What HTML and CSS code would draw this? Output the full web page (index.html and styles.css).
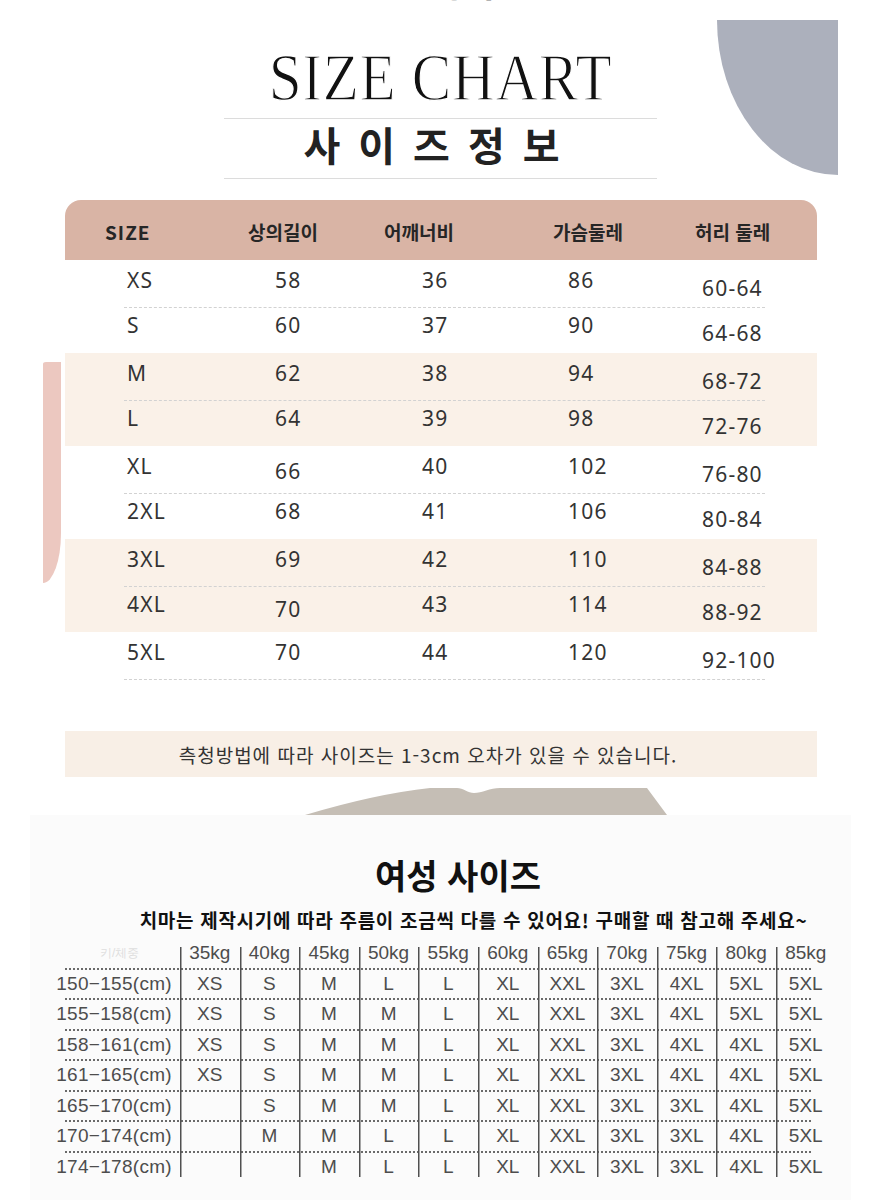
FILE: index.html
```html
<!DOCTYPE html>
<html lang="ko">
<head>
<meta charset="utf-8">
<title>Size Chart</title>
<link rel="stylesheet" href="styles.css">
</head>
<body>
<div class="page">
  <div class="deco-circle"></div>
  <div class="deco-pink"></div>

  <div class="sliver"><span>상품 사이즈</span></div>

  <header class="head">
    <h1 class="title"><span>SIZE CHART</span></h1>
    <div class="rule rule-top"></div>
    <div class="subtitle">사이즈정보</div>
    <div class="rule rule-bottom"></div>
  </header>

  <section class="chart">
    <div class="chart-head">
      <div>SIZE</div><div>상의길이</div><div>어깨너비</div><div>가슴둘레</div><div>허리 둘레</div>
    </div>

    <div class="group">
      <div class="row r1"><span>XS</span><span>58</span><span>36</span><span>86</span><span class="w">60-64</span></div>
      <div class="dash"></div>
      <div class="row r2"><span>S</span><span>60</span><span>37</span><span>90</span><span class="w">64-68</span></div>
    </div>
    <div class="group alt">
      <div class="row r1"><span>M</span><span>62</span><span>38</span><span>94</span><span class="w">68-72</span></div>
      <div class="dash"></div>
      <div class="row r2"><span>L</span><span>64</span><span>39</span><span>98</span><span class="w">72-76</span></div>
    </div>
    <div class="group">
      <div class="row r1"><span>XL</span><span class="lo">66</span><span>40</span><span>102</span><span class="w">76-80</span></div>
      <div class="dash"></div>
      <div class="row r2"><span>2XL</span><span>68</span><span>41</span><span>106</span><span class="w">80-84</span></div>
    </div>
    <div class="group alt">
      <div class="row r1"><span>3XL</span><span>69</span><span>42</span><span>110</span><span class="w">84-88</span></div>
      <div class="dash"></div>
      <div class="row r2"><span>4XL</span><span class="lo">70</span><span>43</span><span>114</span><span class="w">88-92</span></div>
    </div>
    <div class="group">
      <div class="row r1"><span>5XL</span><span>70</span><span>44</span><span>120</span><span class="w">92-100</span></div>
      <div class="dash"></div>
      <div class="row r2"></div>
    </div>
  </section>

  <div class="note">측청방법에 따라 사이즈는 1-3cm 오차가 있을 수 있습니다.</div>

  <svg class="shape" viewBox="0 0 881 27" width="881" height="27" aria-hidden="true">
    <path d="M305 27 Q375 6 430 0 L457 0 C463 0 468 5 474 5 C482 5 490 0 500 0 L647 0 L667 27 Z" fill="#c5beb5"/>
  </svg>

  <section class="women">
    <h2 class="w-title">여성 사이즈</h2>
    <p class="w-sub">치마는 제작시기에 따라 주름이 조금씩 다를 수 있어요! 구매할 때 참고해 주세요~</p>

    <div class="grid">
      <div class="grow ghead">
        <div class="lab faint">키/체중</div>
        <div>35kg</div><div>40kg</div><div>45kg</div><div>50kg</div><div>55kg</div><div>60kg</div><div>65kg</div><div>70kg</div><div>75kg</div><div>80kg</div><div>85kg</div>
      </div>
      <div class="grow">
        <div class="lab">150−155(cm)</div>
        <div>XS</div><div>S</div><div>M</div><div>L</div><div>L</div><div>XL</div><div>XXL</div><div>3XL</div><div>4XL</div><div>5XL</div><div>5XL</div>
      </div>
      <div class="grow">
        <div class="lab">155−158(cm)</div>
        <div>XS</div><div>S</div><div>M</div><div>M</div><div>L</div><div>XL</div><div>XXL</div><div>3XL</div><div>4XL</div><div>5XL</div><div>5XL</div>
      </div>
      <div class="grow">
        <div class="lab">158−161(cm)</div>
        <div>XS</div><div>S</div><div>M</div><div>M</div><div>L</div><div>XL</div><div>XXL</div><div>3XL</div><div>4XL</div><div>4XL</div><div>5XL</div>
      </div>
      <div class="grow">
        <div class="lab">161−165(cm)</div>
        <div>XS</div><div>S</div><div>M</div><div>M</div><div>L</div><div>XL</div><div>XXL</div><div>3XL</div><div>4XL</div><div>4XL</div><div>5XL</div>
      </div>
      <div class="grow">
        <div class="lab">165−170(cm)</div>
        <div></div><div>S</div><div>M</div><div>M</div><div>L</div><div>XL</div><div>XXL</div><div>3XL</div><div>3XL</div><div>4XL</div><div>5XL</div>
      </div>
      <div class="grow">
        <div class="lab">170−174(cm)</div>
        <div></div><div>M</div><div>M</div><div>L</div><div>L</div><div>XL</div><div>XXL</div><div>3XL</div><div>3XL</div><div>4XL</div><div>5XL</div>
      </div>
      <div class="grow glast">
        <div class="lab">174−178(cm)</div>
        <div></div><div></div><div>M</div><div>L</div><div>L</div><div>XL</div><div>XXL</div><div>3XL</div><div>3XL</div><div>4XL</div><div>5XL</div>
      </div>
    </div>
  </section>
</div>
</body>
</html>
```

FILE: styles.css
```css
html, body {
  margin: 0;
  padding: 0;
  background: #ffffff;
}

.page {
  position: relative;
  width: 881px;
  height: 1200px;
  overflow: hidden;
  background: #ffffff;
  font-family: "Noto Sans CJK KR", "Noto Sans", sans-serif;
}

/* decorative shapes */
.deco-circle {
  position: absolute;
  left: 717px;
  top: 20px;
  width: 121px;
  height: 155px;
  background: #acb0bc;
  border-bottom-left-radius: 100% 100%;
}

.deco-pink {
  position: absolute;
  left: 43px;
  top: 362px;
  width: 18px;
  height: 221px;
  background: #ecc8c0;
  border-top-left-radius: 3px 2px;
  border-bottom-right-radius: 18px 50px;
}

/* cut-off text at very top */
.sliver {
  height: 20px;
  overflow: hidden;
  text-align: center;
}
.sliver span {
  display: block;
  margin-top: -37px;
  font: 700 36px/36px "Noto Sans CJK KR", sans-serif;
  color: #777;
}

/* title */
.head {
  margin-top: 23px;
  display: flex;
  flex-direction: column;
  align-items: center;
}
.title {
  margin: 0;
  height: 68px;
  font: 400 68px/68px "Liberation Serif", serif;
  color: #111;
}
.title span {
  display: inline-block;
  transform: scaleX(0.87);
  letter-spacing: 0.8px;
  -webkit-text-stroke: 1.3px #ffffff;
}
.rule {
  width: 433px;
  height: 1px;
  background: #dcdcdc;
}
.rule-top { margin-top: 7px; }
.rule-bottom { margin-top: 9px; }
.subtitle {
  font: 700 40px/50px "Noto Sans CJK KR", sans-serif;
  letter-spacing: 18px;
  color: #222;
}

/* main size chart */
.chart {
  margin: 21px 0 0 65px;
  width: 752px;
}
.chart-head {
  height: 60px;
  box-sizing: border-box;
  padding: 3px 0 0 40px;
  background: #d9b4a5;
  border-radius: 16px 16px 0 0;
  display: grid;
  grid-template-columns: 143px 136px 169px 142px 1fr;
  align-items: center;
  font: 700 19px "Noto Sans CJK KR", sans-serif;
  color: #262626;
}
.chart-head div:first-child {
  letter-spacing: 1px;
}

.group {
  height: 93px;
}
.group.alt {
  background: #faf1e8;
}
.row {
  display: grid;
  grid-template-columns: 148px 147px 146px 134px 1fr;
  padding-left: 62px;
  box-sizing: border-box;
  font: 400 21px "Noto Sans", sans-serif;
  color: #333;
  letter-spacing: 1.2px;
}
.row.r1 {
  height: 47px;
  line-height: 40px;
}
.row.r2 {
  height: 45px;
  line-height: 35px;
}
.row .w {
  padding-top: 8px;
}
.row .lo {
  padding-top: 5px;
}
.dash {
  margin-left: 59px;
  width: 641px;
  height: 0;
  border-top: 1px dashed #d2d2d2;
}

.note {
  margin: 6px 0 0 65px;
  width: 752px;
  height: 46px;
  box-sizing: border-box;
  padding-right: 26px;
  background: #f8efe6;
  display: flex;
  align-items: center;
  justify-content: center;
  font: 400 19px "Noto Sans CJK KR", sans-serif;
  letter-spacing: 1px;
  color: #333;
}

.shape {
  display: block;
  margin-top: 11px;
}

/* women's size section */
.women {
  margin: 0 30px;
  height: 385px;
  box-sizing: border-box;
  padding-top: 39px;
  background: #fbfbfb;
}
.w-title {
  margin: 0;
  padding-left: 35px;
  text-align: center;
  font: 700 34px/42px "Noto Sans CJK KR", sans-serif;
  color: #111;
}
.w-sub {
  margin: 12px 0 0;
  padding-left: 66px;
  text-align: center;
  font: 700 19px/24px "Noto Sans CJK KR", sans-serif;
  letter-spacing: 0.7px;
  color: #111;
}

.grid {
  margin-top: 7px;
}
.grow {
  display: grid;
  grid-template-columns: 130px repeat(11, 59.6px);
  width: 792px;
  height: 30.5px;
  margin-left: 20px;
  background: repeating-linear-gradient(90deg, #6a6a6a 0 2px, transparent 2px 4px) 15px bottom / 747px 2px no-repeat;
  font: 400 19px "Liberation Sans", Arial, sans-serif;
  color: #4d4d4d;
}
.grow > div {
  box-sizing: border-box;
  height: 30.5px;
  padding-bottom: 2px;
  line-height: 28.5px;
  text-align: center;
  white-space: nowrap;
  background: linear-gradient(#505050, #505050) left top / 1.5px 100% no-repeat;
}
.grow > .lab {
  background: none;
  text-align: right;
  padding-right: 8px;
  letter-spacing: 0.3px;
}
.ghead > div {
  background-position: left bottom;
  background-size: 1.5px 23px;
}
.ghead > .faint {
  text-align: left;
  padding-left: 50px;
  font-size: 12px;
  letter-spacing: 0;
  color: #dedede;
}
.glast {
  background: none;
}
.glast > div {
  background-size: 1.5px 24px;
}
```
